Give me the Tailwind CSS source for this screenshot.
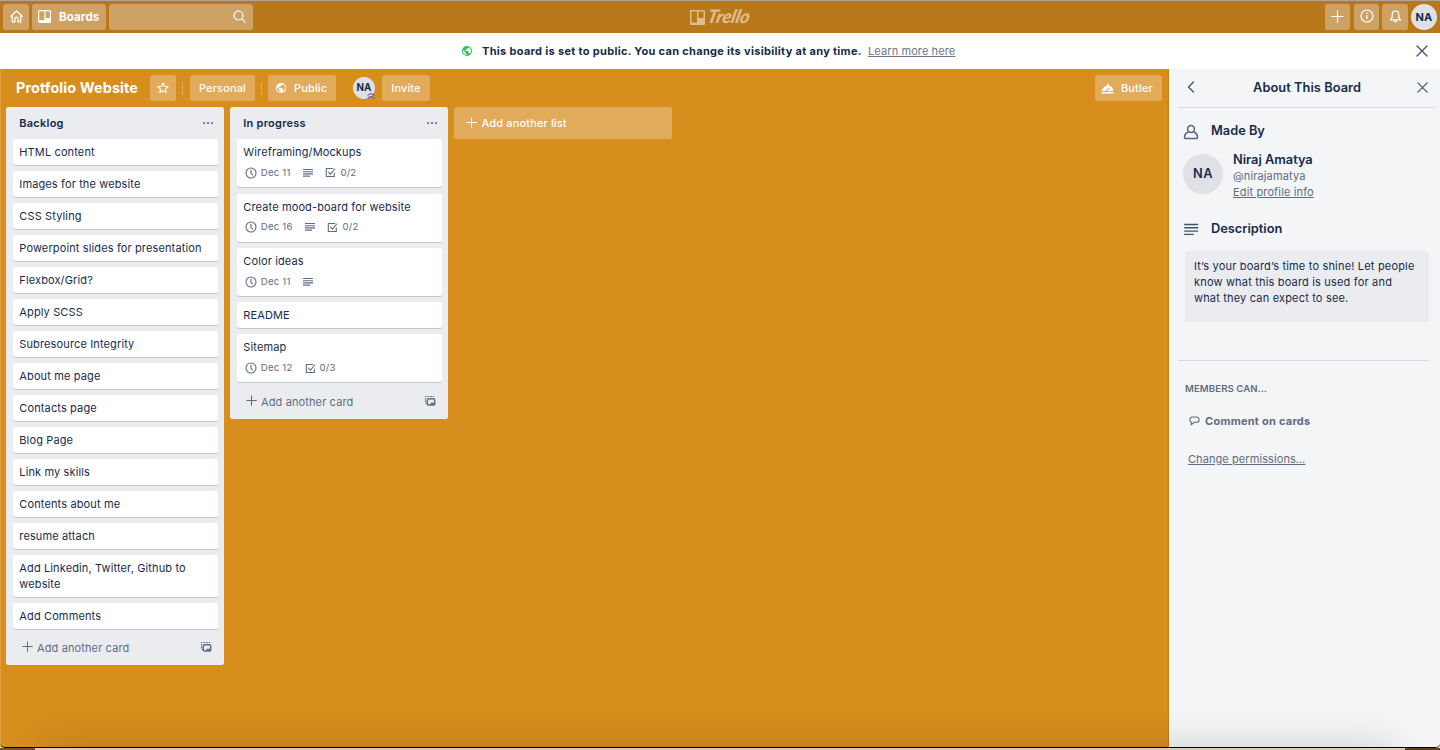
<!DOCTYPE html>
<html lang="en">
<head>
<meta charset="utf-8">
<title>Protfolio Website | Trello</title>
<script src="https://cdn.jsdelivr.net/npm/@tailwindcss/browser@4"></script>
</head>
<body class="w-[1440px] h-[750px] overflow-hidden bg-[#d9d0bb] font-['Inter',sans-serif] text-[11px] tracking-[.14px] leading-4 text-[#172b4d]">
<svg class="hidden">
  <defs>
    <symbol id="plus" viewBox="0 0 12 12"><path d="M6 .8v10.4M.8 6h10.4" fill="none" stroke="currentColor" stroke-width="1.15" stroke-linecap="round"/></symbol>
    <symbol id="close" viewBox="0 0 12 12"><path d="M1 1l10 10M11 1L1 11" fill="none" stroke="currentColor" stroke-width="1.3" stroke-linecap="round"/></symbol>
    <symbol id="clock" viewBox="0 0 12 12"><g fill="none" stroke="currentColor" stroke-width="1.1" stroke-linecap="round"><circle cx="6" cy="6" r="5"/><path d="M6 3v3.2L7.6 8"/></g></symbol>
    <symbol id="lines" viewBox="0 0 10 10"><path d="M0 1.5h10M0 3.7h10M0 5.9h10M0 8.1h7" fill="none" stroke="currentColor" stroke-width="1.1"/></symbol>
    <symbol id="check" viewBox="0 0 11 11"><g fill="none" stroke="currentColor" stroke-width="1.1" stroke-linejoin="round" stroke-linecap="round"><path d="M7.8 1.5H1.3v8h8V6"/><path d="M3.4 5l2 2.2L9.8 2"/></g></symbol>
    <symbol id="dots" viewBox="0 0 12 4"><g fill="currentColor"><circle cx="2" cy="2" r="1.1"/><circle cx="6" cy="2" r="1.1"/><circle cx="10" cy="2" r="1.1"/></g></symbol>
    <symbol id="template" viewBox="0 0 12 12"><path d="M1 1.5h1.4M3.4 1.5h1.8M6.200 1.5H8M8.800 1.5h1.200M1.5 3v1.600M1.5 5.600v1.600M1.5 8.500h1.200" fill="none" stroke="currentColor" stroke-width="1.1"/><rect x="3.300" y="3.700" width="7.400" height="6.400" rx="1.200" fill="none" stroke="currentColor" stroke-width="1.500"/><path d="M6.500 7.700h4v2h-4z" fill="currentColor"/></symbol>
    <symbol id="globe" viewBox="0 0 24 24"><path fill="currentColor" d="M12 2a10 10 0 1 0 0 20 10 10 0 0 0 0-20zm-1 17.930A8 8 0 0 1 4.200 10.200L9 15v1c0 1.100.9 2 2 2v1.930zm6.900-2.540A2 2 0 0 0 16 16h-1v-3a1 1 0 0 0-1-1H8v-2h2a1 1 0 0 0 1-1V7h2a2 2 0 0 0 2-2v-.410a8 8 0 0 1 2.900 12.800z"/></symbol>
  </defs>
</svg>

<div class="relative h-[748px] flex flex-col bg-[#d88e1d] border-b border-black rounded-b-[5px] overflow-hidden">
  <header class="h-[33px] shrink-0 bg-[#b97819] border-t border-[#aaa69f] flex items-center px-[3px] text-white">
    <div class="flex-1 flex gap-[3px]">
      <div class="w-[26px] h-[26px] rounded-[2.5px] bg-[#cea164] flex items-center justify-center">
        <svg class="w-[13px] h-[13px] -mt-[2px]" viewBox="0 0 13 13" fill="none" stroke="#fff" stroke-width="1.2" stroke-linejoin="round" stroke-linecap="round"><path d="M.8 6.300L6.500 1l5.700 5.300M2.200 5.300v6.500h2.800V8.600a1.500 1.500 0 0 1 3 0v3.200h2.800V5.300"/></svg>
      </div>
      <div class="w-[74px] h-[26px] rounded-[2.500px] bg-[#cea164] flex items-center pl-[6px] gap-[8px]">
        <svg class="w-[13px] h-[13px] -mt-[2px]" viewBox="0 0 13 13"><rect x=".6" y=".6" width="11.800" height="11.800" rx="1" fill="none" stroke="#fff" stroke-width="1.200"/><path d="M1 10.300h6.300V8h5v4H1z" fill="#fff"/><path d="M6.900 1v11" stroke="#fff" stroke-width="1.200"/></svg>
        <span class="font-bold text-[11.500px]">Boards</span>
      </div>
      <div class="w-[144px] h-[26px] rounded-[2.500px] bg-[#cea164] flex items-center justify-end pr-[7px]">
        <svg class="w-[13px] h-[13px] -mt-[2px]" viewBox="0 0 13 13" fill="none" stroke="#fff" stroke-width="1.200" stroke-linecap="round"><circle cx="5.500" cy="5.500" r="4.500"/><path d="M8.900 8.900l3.200 3.200"/></svg>
      </div>
    </div>
    <div class="w-[60px] flex items-center gap-[3px] text-[#dcbc8c]">
      <svg class="w-[15px] h-[15px] shrink-0" viewBox="0 0 15 15"><path fill="currentColor" fill-rule="evenodd" d="M1 0h13a1 1 0 0 1 1 1v13a1 1 0 0 1-1 1H1a1 1 0 0 1-1-1V1a1 1 0 0 1 1-1zM1.500 1.500v11H7v-11zM8.500 1.500v6.500h5V1.500z"/></svg>
      <span class="font-['Lato',sans-serif] italic font-black text-[18.500px] tracking-[-0.2px] -skew-x-12 -mt-[2px]">Trello</span>
    </div>
    <div class="flex-1 flex justify-end items-center gap-[3px]">
      <div class="w-[25px] h-[26px] rounded-[2.500px] bg-[#cea164] flex items-center justify-center"><svg class="w-[13px] h-[13px] -mt-[2px]"><use href="#plus"/></svg></div>
      <div class="w-[25px] h-[26px] ml-px rounded-[2.500px] bg-[#cea164] flex items-center justify-center"><svg class="w-[14px] h-[14px] -mt-[2px]" viewBox="0 0 14 14" fill="none" stroke="#fff" stroke-width="1.200"><circle cx="7" cy="7" r="6"/><path d="M7 6.200v4M7 3.500v1.400"/></svg></div>
      <div class="w-[26px] h-[26px] rounded-[2.500px] bg-[#cea164] flex items-center justify-center"><svg class="w-[13px] h-[13px] -mt-[2px]" viewBox="0 0 13 13" fill="none" stroke="#fff" stroke-width="1.200" stroke-linejoin="round"><path d="M6.500 1C4.300 1 3.200 2.800 3.200 4.600v2.700L1.500 9.900h10L9.800 7.300V4.600C9.800 2.800 8.700 1 6.500 1z"/><path d="M5.300 10.500c0 2 2.400 2 2.400 0"/></svg></div>
      <div class="w-[26px] h-[26px] rounded-full bg-[#dfe1e6] text-[#172b4d] font-bold text-[11px] tracking-[.3px] flex items-center justify-center">NA</div>
    </div>
  </header>

  <div class="h-9 shrink-0 bg-white flex items-center pl-[461px]">
    <svg class="w-[12px] h-[12px] -mt-px text-[#2fc253]"><use href="#globe"/></svg>
    <span class="ml-[9px] w-[380px] whitespace-nowrap font-bold tracking-[.31px]">This board is set to public. You can change its visibility at any time.</span>
    <span class="ml-[6px] underline text-[#6b778c] tracking-[.1px]">Learn more here</span>
    <svg class="ml-auto mr-[12px] w-[12px] h-[12px] text-[#42526e]"><use href="#close"/></svg>
  </div>

  <div class="flex-1 min-h-0 flex">
    <main class="flex-1 min-w-0 border-l border-[#df9f41]">
      <div class="h-[38px] flex items-center pl-[15px] pr-[7px] text-white font-medium">
        <h1 class="w-[134px] shrink-0 font-bold text-[14.400px] tracking-[.1px] whitespace-nowrap">Protfolio Website</h1>
        <div class="w-[26px] h-[26px] rounded-[2.500px] bg-[#e2aa5b] flex items-center justify-center"><svg class="w-[12px] h-[12px]" viewBox="0 0 12 12" fill="none" stroke="#fff" stroke-width="1.100" stroke-linejoin="round"><path d="M6 .9l1.500 3.300 3.600.4-2.700 2.400.8 3.600L6 8.800l-3.200 1.800.8-3.600L.9 4.600l3.600-.4z"/></svg></div>
        <div class="w-px h-[13px] ml-[6px] mr-[7px] bg-[#e2aa5b]"></div>
        <div class="w-[65px] h-[26px] rounded-[2.500px] bg-[#e2aa5b] flex items-center justify-center">Personal</div>
        <div class="w-px h-[13px] mx-[6px] bg-[#e2aa5b]"></div>
        <div class="w-[68px] h-[26px] rounded-[2.500px] bg-[#e2aa5b] flex items-center pl-[7px] gap-[7px]"><svg class="w-[12px] h-[12px] -mt-px"><use href="#globe"/></svg>Public</div>
        <div class="relative ml-[17px] w-[22px] h-[22px] rounded-full bg-[#dfe1e6] text-[#172b4d] font-bold text-[9.800px] flex items-center justify-center">NA
          <svg class="absolute right-0 bottom-0 w-[8px] h-[6px]" viewBox="0 0 8 6"><path d="M.5 2.500L3 .8h2l2.500 1.700M.5 5.500L3 3.600h2l2.500 1.900" fill="none" stroke="#6a5fc0" stroke-width="1.200"/></svg>
        </div>
        <div class="ml-[7px] w-[48px] h-[26px] rounded-[2.500px] bg-[#e2aa5b] flex items-center justify-center">Invite</div>
        <div class="ml-auto w-[67px] h-[26px] rounded-[2.500px] bg-[#e2aa5b] flex items-center pl-[6px] gap-[7px]"><svg class="w-[13px] h-[11px] shrink-0" viewBox="0 0 13 11"><path fill="#fff" d="M.5 9h12v1.500H.5zM.8 8c.2-1.500 1.100-3 2.500-4L6 2.500 5.600 1.500l1.700-.9.8 1.800C10.600 2.900 12 5 12.200 8H5.500l3.200-2.600-.6-.9L3.900 8z"/></svg>Butler</div>
      </div>

      <div class="flex items-start pl-[5px] gap-[6px]">
        <section id="backlog" class="w-[218px] h-[558px] rounded-[2.500px] bg-[#ebecf0] px-[7px]"></section>
        <section id="progress" class="w-[218px] h-[312px] rounded-[2.500px] bg-[#ebecf0] px-[7px]"></section>
        <div class="w-[218px] h-[32px] rounded-[2.500px] bg-[#e2aa5b] flex items-center pl-[12px] gap-[4.500px] text-white font-medium"><svg class="w-[11px] h-[11px] -mt-px"><use href="#plus"/></svg>Add another list</div>
      </div>
    </main>

    <aside class="w-[271px] bg-[#f4f5f7] shadow-[-1px_0_1px_rgba(90,50,0,.15)] text-[#172b4d]">
      <div class="h-[39px] ml-[9px] mr-[5px] border-b border-[#d5d9e2] flex items-center">
        <svg class="ml-[9px] mb-[2px] w-[8px] h-[12px]" viewBox="0 0 8 12"><path d="M6.500 1L1.500 6l5 5" fill="none" stroke="#42526e" stroke-width="1.300" stroke-linecap="round"/></svg>
        <h2 class="flex-1 text-center font-semibold text-[12.800px] tracking-[.05px] pl-[2px]">About This Board</h2>
        <svg class="mr-[7px] mb-[2px] w-[11px] h-[11px] text-[#42526e]"><use href="#close"/></svg>
      </div>
      <div class="mt-[15px] ml-[14px] flex items-center gap-[12px]">
        <svg class="w-[16px] h-[16px] mt-px -mb-px" viewBox="0 0 16 16" fill="none" stroke="#55647f" stroke-width="1.500"><circle cx="8" cy="5" r="3.400"/><path d="M5.700 7.800C3 8.800 1.500 11 1.500 13.600c0 .7.400 1 1 1h11c.6 0 1-.3 1-1 0-2.600-1.500-4.800-4.200-5.800"/></svg>
        <h3 class="font-semibold text-[12.800px] tracking-[0]">Made By</h3>
      </div>
      <div class="mt-[13px] ml-[14px] flex gap-[10px]">
        <div class="mt-[2px] w-[40px] h-[40px] rounded-full bg-[#dfe1e6] flex items-center justify-center font-semibold text-[12.800px] tracking-[.4px]">NA</div>
        <div>
          <div class="font-semibold text-[12.800px] tracking-[0]">Niraj Amatya</div>
          <div class="text-[#5e6c84]">@nirajamatya</div>
          <div class="text-[#5e6c84] underline">Edit profile info</div>
        </div>
      </div>
      <div class="mt-[21px] ml-[15px] flex items-center gap-[12px]">
        <svg class="w-[15px] h-[13px]" viewBox="0 0 15 13"><path d="M.2 1.500h14M.2 4.800h14M.2 8.100h14M.2 11.400h9.500" stroke="#42526e" stroke-width="1.400"/></svg>
        <h3 class="font-semibold text-[12.800px] tracking-[0]">Description</h3>
      </div>
      <div class="mt-[14px] ml-[16px] w-[244px] h-[71px] rounded-[2.500px] bg-[#ebecf0] pt-[7px] pl-[9px] whitespace-nowrap tracking-[.18px]">It’s your board’s time to shine! Let people<br>know what this board is used for and<br>what they can expect to see.</div>
      <div class="mt-[38px] ml-[9px] w-[251px] h-px bg-[#d5d9e2]"></div>
      <div class="mt-[20px] ml-[16px] font-semibold text-[9.600px] text-[#5e6c84] tracking-[.1px]">MEMBERS CAN…</div>
      <div class="mt-[16px] ml-[20px] flex items-center gap-[5px] font-bold text-[#5e6c84] tracking-[.25px]">
        <svg class="w-[11px] h-[10px]" viewBox="0 0 11 10"><path d="M3.500 1h4a2.500 2.500 0 0 1 0 5.300H5.300L2.200 8.800V6C-.3 4.700.6 1 3.500 1z" fill="none" stroke="currentColor" stroke-width="1.100" stroke-linejoin="round"/></svg>
        Comment on cards
      </div>
      <div class="mt-[22px] ml-[19px] underline text-[#5e6c84] tracking-[.08px]">Change permissions…</div>
    </aside>
  </div>
  <div class="absolute left-[45px] right-[45px] -bottom-[36px] h-[36px] shadow-[0_-2px_36px_rgba(0,0,0,.15)]"></div>
</div>
<div class="h-[2px] flex justify-between"><div class="w-[35px] bg-[#765433]"></div><div class="w-[35px] bg-[#60401c]"></div></div>

<script>
const icon = (name, size) => `<svg class="${size}"><use href="#${name}"/></svg>`;
const card = c => `<div class="mb-[6.400px] w-[205px] rounded-[2.500px] bg-white shadow-[0_1px_0_#c1c7d0] pl-[6.300px] pr-[10px] pt-[5px] pb-[4.600px] leading-4 tracking-[.13px]">${c.title}${c.date ? `
  <div class="mt-[3.200px] h-[19.200px] flex items-center pl-[2px] text-[9.600px] text-[#5e6c84]">
    ${icon('clock', 'w-[12px] h-[12px] shrink-0')}<span class="ml-[3.500px] tracking-[.22px]">${c.date}</span>
    ${c.desc ? icon('lines', 'w-[10px] h-[10px] ml-[12.800px] shrink-0') : ''}
    ${c.check ? icon('check', 'w-[11px] h-[11px] ml-[12px] shrink-0') + `<span class="ml-[4px] tracking-[.2px]">${c.check}</span>` : ''}
  </div>` : ''}</div>`;
const list = (id, title, cards) => {
  document.getElementById(id).innerHTML = `
  <div class="h-[32.200px] flex items-center justify-between pl-[6.300px] pr-[3px] text-[#172b4d]"><h2 class="font-semibold tracking-[.25px]">${title}</h2><span class="text-[#5e6c84]">${icon('dots', 'w-[12px] h-[4px]')}</span></div>
  ${cards.map(card).join('')}
  <div class="h-[24px] mt-[7.400px] flex items-center pl-[9px] pr-[5px] text-[#5e6c84]">${icon('plus', 'w-[11px] h-[11px] -mt-[2px]')}<span class="ml-[4px] tracking-[.12px]">Add another card</span><span class="ml-auto">${icon('template', 'w-[12px] h-[12px] -mt-px')}</span></div>`;
};
list('backlog', 'Backlog', ['HTML content', 'Images for the website', 'CSS Styling', 'Powerpoint slides for presentation', 'Flexbox/Grid?', 'Apply SCSS', 'Subresource Integrity', 'About me page', 'Contacts page', 'Blog Page', 'Link my skills', 'Contents about me', 'resume attach', 'Add Linkedin, Twitter, Github to website', 'Add Comments'].map(title => ({title})));
list('progress', 'In progress', [
  {title: 'Wireframing/Mockups', date: 'Dec 11', desc: true, check: '0/2'},
  {title: 'Create mood-board for website', date: 'Dec 16', desc: true, check: '0/2'},
  {title: 'Color ideas', date: 'Dec 11', desc: true},
  {title: 'README'},
  {title: 'Sitemap', date: 'Dec 12', check: '0/3'}
]);
</script>
</body>
</html>
